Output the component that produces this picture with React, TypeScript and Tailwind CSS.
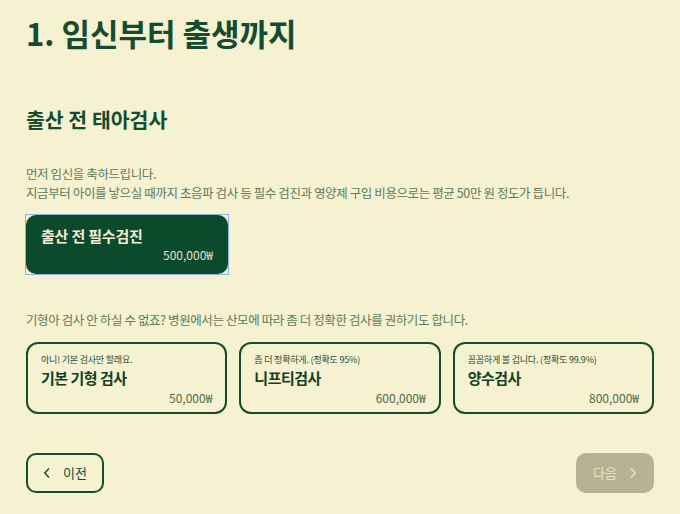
import React from "react";

const font = { fontFamily: '"Noto Sans CJK KR", "Noto Sans", sans-serif' };

function Card({ label, title, price }: { label: string; title: string; price: string }) {
  return (
    <div className="flex h-[72px] flex-col rounded-[12px] border-2 border-[#124d31] px-[13px] pt-[9px]">
      <div className="text-[9px] leading-[14px] tracking-[-0.2px] text-[#2c4a35]">{label}</div>
      <div className="text-[15px] font-bold leading-[22px] tracking-[-0.5px] text-[#123f27]">{title}</div>
      <div className="mt-[1px] text-right text-[12px] leading-[16px] text-[#4f6b50]">{price}</div>
    </div>
  );
}

export default function App() {
  return (
    <div className="min-h-[514px] w-full bg-[#f5f1d1] px-[26px] pt-[11px]" style={font}>
      <h1 className="text-[31px] font-bold leading-[44px] text-[#124d31]">1. 임신부터 출생까지</h1>
      <h2 className="mt-[49px] text-[20.5px] font-bold leading-[30px] text-[#124d31]">출산 전 태아검사</h2>
      <div className="mt-[30px] text-[12.5px] leading-[19px] tracking-[-0.4px] text-[#5e7a5c]">
        <p>먼저 임신을 축하드립니다.</p>
        <p>지금부터 아이를 낳으실 때까지 초음파 검사 등 필수 검진과 영양제 구입 비용으로는 평균 50만 원 정도가 듭니다.</p>
      </div>
      <div className="-ml-[1px] mt-[12px] w-[204px] border border-[#8fb0e6]">
        <div className="flex h-[59px] flex-col rounded-[10px] bg-[#0c4a2e] px-[15px] pt-[10px]">
          <div className="text-[15px] font-bold leading-[22px] tracking-[-0.2px] text-[#f3efd2]">출산 전 필수검진</div>
          <div className="text-right text-[12px] leading-[16px] text-[#e6e2c4]">500,000₩</div>
        </div>
      </div>
      <p className="mt-[35px] text-[12.5px] leading-[19px] tracking-[-0.4px] text-[#5e7a5c]">
        기형아 검사 안 하실 수 없죠? 병원에서는 산모에 따라 좀 더 정확한 검사를 권하기도 합니다.
      </p>
      <div className="mt-[13px] grid grid-cols-3 gap-3">
        <Card label="아니! 기본 검사만 할래요." title="기본 기형 검사" price="50,000₩" />
        <Card label="좀 더 정확하게. (정확도 95%)" title="니프티검사" price="600,000₩" />
        <Card label="꼼꼼하게 볼 겁니다. (정확도 99.9%)" title="양수검사" price="800,000₩" />
      </div>
      <div className="mt-[39px] flex justify-between">
        <button className="flex h-[40px] w-[78px] items-center justify-center gap-[12px] rounded-[10px] border-2 border-[#124d31] text-[13px] text-[#124d31]">
          <svg width="8" height="12" viewBox="0 0 8 12" fill="none" stroke="#124d31" strokeWidth="1.5"><path d="M6 1.5 1.8 6 6 10.5" /></svg>
          <span>이전</span>
        </button>
        <button className="flex h-[40px] w-[78px] items-center justify-center gap-[12px] rounded-[10px] bg-[#b6b393] text-[13px] text-[#ebe7c8]">
          <span>다음</span>
          <svg width="8" height="12" viewBox="0 0 8 12" fill="none" stroke="#ebe7c8" strokeWidth="1.5"><path d="M2 1.5 6.2 6 2 10.5" /></svg>
        </button>
      </div>
    </div>
  );
}
